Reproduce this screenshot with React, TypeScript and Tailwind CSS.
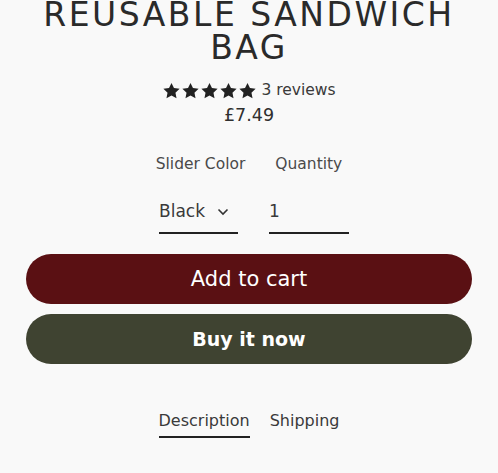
import React, { useState } from "react";

const Star = () => (
  <svg width="19" height="18" viewBox="0 0 24 24" className="fill-[#222]">
    <path d="M12 1.2l3.3 6.9 7.5.9-5.5 5.2 1.4 7.5L12 18l-6.7 3.7 1.4-7.5L1.2 9l7.5-.9z" />
  </svg>
);

const App: React.FC = () => {
  const [tab, setTab] = useState<string>("Description");

  return (
    <div
      className="w-[498px] h-[473px] overflow-hidden bg-[#f9f9f9] text-[#2a2a2a]"
      style={{ fontFamily: '"DejaVu Sans", sans-serif' }}
    >
      {/* Title */}
      <h1 className="-mt-[2px] text-center text-[33px] leading-[33px] tracking-[2.5px] font-normal">
        REUSABLE SANDWICH
        <br />
        BAG
      </h1>

      {/* Rating and price */}
      <div className="mt-[15px] flex items-center justify-center gap-[4px]">
        <div className="flex">
          <Star />
          <Star />
          <Star />
          <Star />
          <Star />
        </div>
        <span className="text-[15.5px] text-[#3a3a3a]">3 reviews</span>
      </div>
      <p className="mt-0 text-center text-[17.5px] text-[#2f2f2f]">£7.49</p>

      {/* Options */}
      <div className="mt-[24px] flex justify-center gap-[30px] text-[15.5px] text-[#4a4a4a]">
        <span>Slider Color</span>
        <span>Quantity</span>
      </div>
      <div className="mt-[23px] flex justify-center gap-[31px] pl-[10px]">
        <div className="w-[79px] border-b-2 border-[#222] pb-[8px] flex items-center justify-between text-[17px] text-[#3a3a3a]">
          <span>Black</span>
          <svg width="12" height="8" viewBox="0 0 12 8" className="mr-[9px]">
            <path d="M1.5 1.5L6 6l4.5-4.5" fill="none" stroke="#333" strokeWidth="1.6" />
          </svg>
        </div>
        <div className="w-[80px] border-b-2 border-[#222] pb-[8px] text-[17px] text-[#3a3a3a]">1</div>
      </div>

      {/* Buttons */}
      <div className="mt-[20px] px-[26px] flex flex-col gap-[10px]">
        <button className="h-[50px] rounded-full bg-[#5a1013] text-white text-[21px]">
          Add to cart
        </button>
        <button className="h-[50px] rounded-full bg-[#3f4331] text-white text-[19px] font-semibold">
          Buy it now
        </button>
      </div>

      {/* Tabs */}
      <div className="mt-[45px] flex justify-center gap-[20px] text-[16px] text-[#3a3a3a]">
        {["Description", "Shipping"].map((t) => (
          <button
            key={t}
            onClick={() => setTab(t)}
            className={`pb-[3px] border-b-2 ${tab === t ? "border-[#222]" : "border-transparent"}`}
          >
            {t}
          </button>
        ))}
      </div>
    </div>
  );
};

export default App;
